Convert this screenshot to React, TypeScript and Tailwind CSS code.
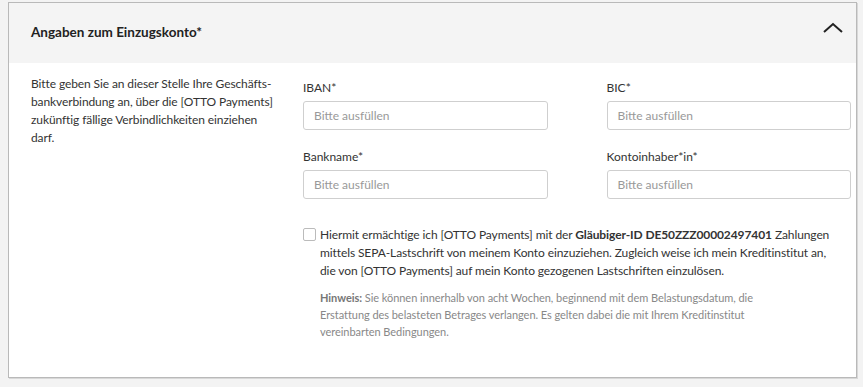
import React from "react";

function Field({ label }: { label: string }) {
  return (
    <div className="flex flex-col">
      <div className="text-[12px] leading-[18px] text-[#333] pt-[9px]">{label}</div>
      <div className="mt-[4px] h-[29px] w-full rounded-[3px] border border-[#cfcfcf] bg-white px-[10px] flex items-center text-[12px] text-[#999]">
        Bitte ausfüllen
      </div>
    </div>
  );
}

export default function App() {
  return (
    <div
      className="w-[863px] h-[387px] bg-[#f3f3f3] pt-[2px] pl-[8px] pr-[6px]"
      style={{ fontFamily: "Lato, 'Open Sans', sans-serif" }}
    >
      <div className="h-[376px] border border-[#b9b9b9] bg-white shadow-[1px_1px_0_#d8d8d8] flex flex-col">
        <div className="h-[60px] bg-[#f4f4f4] flex items-center justify-between pl-[22px] pr-[12px]">
          <div className="text-[13.5px] font-bold text-[#222] mt-[-2px]">Angaben zum Einzugskonto*</div>
          <svg width="22" height="14" viewBox="0 0 22 14" className="mt-[-10px]">
            <path d="M2 11 L11 3 L20 11" fill="none" stroke="#222" strokeWidth="2" />
          </svg>
        </div>
        <div className="flex pl-[22px] pr-[5px] pt-[12px]">
          <div className="w-[250px] text-[12px] leading-[18px] text-[#333] tracking-[-0.1px]">
            Bitte geben Sie an dieser Stelle Ihre Geschäfts-bankverbindung an, über die [OTTO Payments] zukünftig fällige Verbindlichkeiten einziehen darf.
          </div>
          <div className="ml-[22px] flex-1">
            <div className="grid grid-cols-2 gap-x-[59px] gap-y-[9px] mt-[-5px]">
              <Field label="IBAN*" />
              <Field label="BIC*" />
              <Field label="Bankname*" />
              <Field label="Kontoinhaber*in*" />
            </div>
            <div className="flex mt-[28px]">
              <div className="w-[13px] h-[13px] border border-[#bbb] rounded-[2px] mt-[1px] shrink-0"></div>
              <div className="ml-[4px] text-[12px] leading-[18px] text-[#333] pr-[10px] tracking-[-0.1px] mt-[-1px]">
                Hiermit ermächtige ich [OTTO Payments] mit der <b>Gläubiger-ID DE50ZZZ00002497401</b> Zahlungen mittels SEPA-Lastschrift von meinem Konto einzuziehen. Zugleich weise ich mein Kreditinstitut an, die von [OTTO Payments] auf mein Konto gezogenen Lastschriften einzulösen.
              </div>
            </div>
            <div className="ml-[17px] mt-[9px] pr-[70px] text-[11px] leading-[17px] text-[#888] tracking-[-0.05px]">
              <b className="text-[#777]">Hinweis:</b> Sie können innerhalb von acht Wochen, beginnend mit dem Belastungsdatum, die Erstattung des belasteten Betrages verlangen. Es gelten dabei die mit Ihrem Kreditinstitut vereinbarten Bedingungen.
            </div>
          </div>
        </div>
      </div>
    </div>
  );
}
